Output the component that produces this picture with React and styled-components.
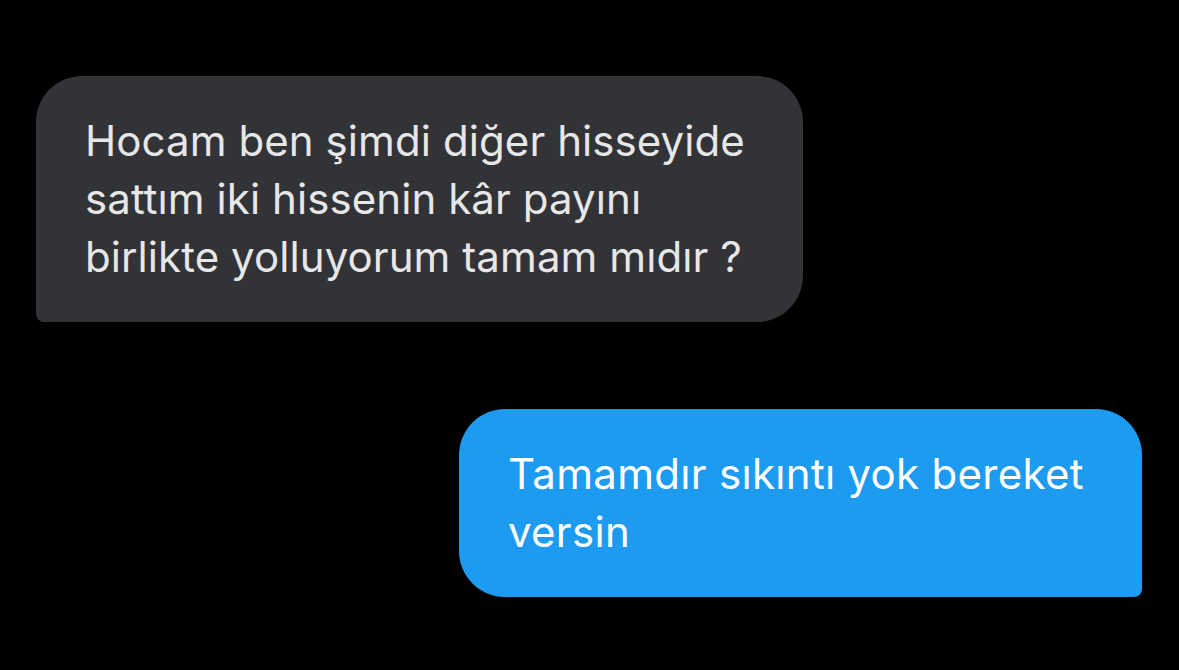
import React from 'react';
import styled, { createGlobalStyle } from 'styled-components';

const GlobalStyle = createGlobalStyle`
  html, body {
    margin: 0;
    padding: 0;
    background: #000;
  }
`

const Screen = styled.div`
  width: 1179px;
  height: 670px;
  background: #000;
  box-sizing: border-box;
  padding: 76px 37px 0 36px;
  display: flex;
  flex-direction: column;
  gap: 87px;
  font-family: Inter, "Noto Sans", sans-serif;
`

const Row = styled.div`
  display: flex;
  justify-content: ${p => (p.mine ? 'flex-end' : 'flex-start')};
`

const Bubble = styled.div`
  box-sizing: border-box;
  width: ${p => p.width}px;
  padding: 36px 40px 36px 49px;
  background: ${p => (p.mine ? '#1d9bf0' : '#323336')};
  color: ${p => (p.mine ? '#ffffff' : '#e7e7e8')};
  border-radius: ${p => (p.mine ? '46px 46px 8px 46px' : '46px 46px 46px 8px')};
  font-size: 42px;
  line-height: 58px;
  letter-spacing: ${p => (p.mine ? '0.3px' : '0.08px')};
  white-space: nowrap;
`

const Line = styled.div``

const messages = [
  { mine: false, width: 767, lines: ['Hocam ben şimdi diğer hisseyide', 'sattım iki hissenin kâr payını', 'birlikte yolluyorum tamam mıdır ?'] },
  { mine: true, width: 683, lines: ['Tamamdır sıkıntı yok bereket', 'versin'] },
]

const App = () => (
  <>
    <GlobalStyle />
    <Screen>
      {messages.map((m, i) => (
        <Row key={i} mine={m.mine}>
          <Bubble mine={m.mine} width={m.width}>
            {m.lines.map((l, j) => <Line key={j}>{l}</Line>)}
          </Bubble>
        </Row>
      ))}
    </Screen>
  </>
)

export default App
